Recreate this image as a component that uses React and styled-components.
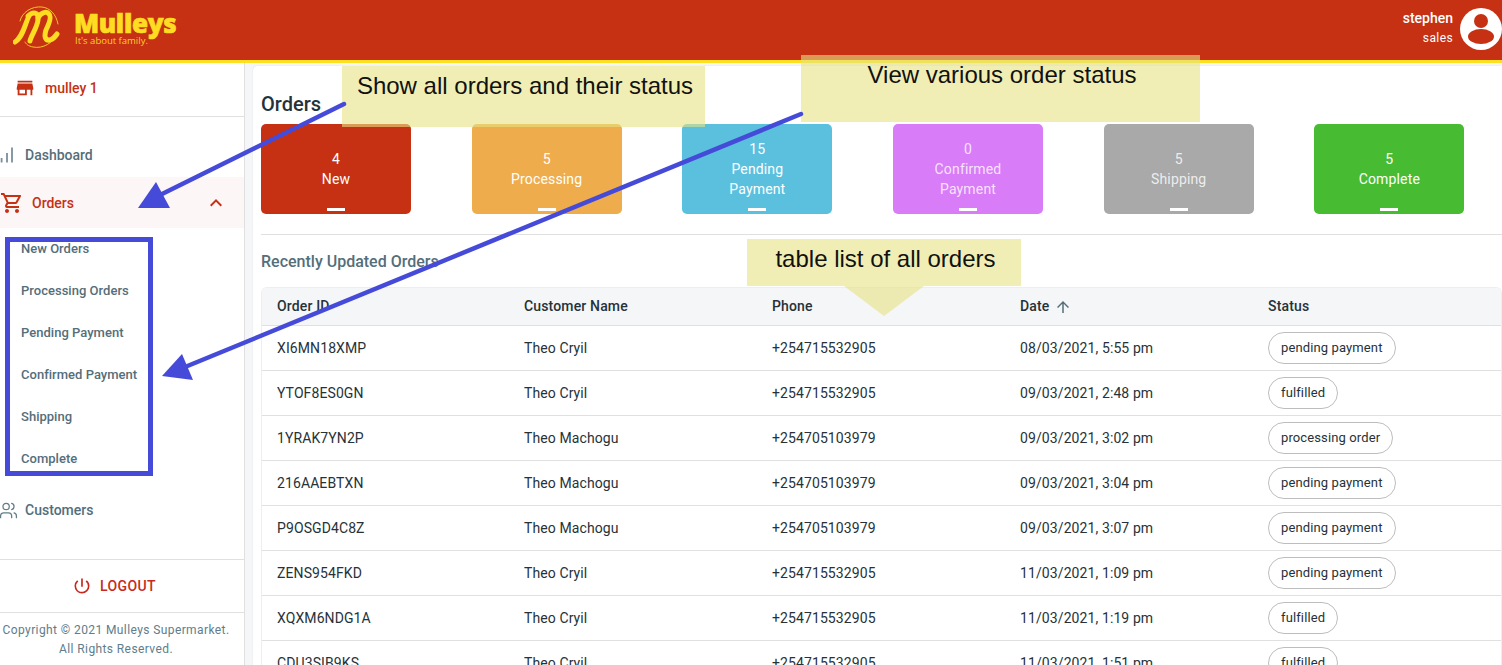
import React from "react";
import styled, { createGlobalStyle } from "styled-components";
import { MdStore, MdOutlineShoppingCart, MdExpandLess, MdArrowUpward, MdPowerSettingsNew } from "react-icons/md";
import { Users } from "lucide-react";

const Global = createGlobalStyle`
  html, body { margin: 0; padding: 0; height: 665px; overflow: hidden; background: #fff; }
  body { font-family: Roboto, "Liberation Sans", sans-serif; }
  * { box-sizing: border-box; }
`;

const Page = styled.div`
  position: relative;
  width: 1502px;
  height: 665px;
  overflow: hidden;
  display: flex;
  flex-direction: column;
  background: #f4f6f8;
`;

const Header = styled.header`
  flex: 0 0 63px;
  background: #c63113;
  border-bottom: 3px solid #fde021;
  display: flex;
  align-items: flex-start;
  justify-content: space-between;
  padding: 6px 0 0 13px;
`;

const Brand = styled.div`
  display: flex;
  align-items: flex-start;
  gap: 14px;
`;

const BrandText = styled.div`
  display: flex;
  flex-direction: column;
  padding-top: 4px;
`;

const BrandName = styled.div`
  font-family: "Open Sans", sans-serif;
  font-weight: 800;
  font-size: 26px;
  line-height: 26px;
  letter-spacing: -0.35px;
  color: #fddc22;
  -webkit-text-stroke: 0.7px #fddc22;
`;

const BrandTag = styled.div`
  font-family: "Open Sans", sans-serif;
  font-size: 9.5px;
  line-height: 10px;
  color: #fbd02a;
  margin-top: 0;
  margin-left: 1px;
`;

const User = styled.div`
  display: flex;
  gap: 7px;
  color: #fff;
  margin-top: 2px;
`;

const UserText = styled.div`
  display: flex;
  flex-direction: column;
  align-items: flex-end;
  padding-top: 1px;
`;

const UserName = styled.div`
  font-size: 14px;
  font-weight: 500;
  line-height: 18px;
`;

const UserRole = styled.div`
  font-size: 12px;
  line-height: 16px;
  margin-top: 3px;
  letter-spacing: 0.4px;
`;

const Body = styled.div`
  flex: 1;
  display: flex;
  min-height: 0;
`;

const Sidebar = styled.aside`
  flex: 0 0 245px;
  background: #fff;
  border-right: 1px solid #e0e0e0;
  display: flex;
  flex-direction: column;
`;

const Shop = styled.div`
  height: 54px;
  flex: none;
  display: flex;
  align-items: center;
  gap: 9px;
  padding: 0 0 4px 14px;
  border-bottom: 1px solid #e0e0e0;
  color: #c63113;
  font-size: 14px;
  font-weight: 500;
`;

const Nav = styled.nav`
  flex: 1;
  padding-top: 18px;
  display: flex;
  flex-direction: column;
`;

const NavItem = styled.div`
  height: ${(p) => (p.$active ? 51 : 42)}px;
  padding: 0 16px ${(p) => (p.$active ? 0 : 2)}px 0;
  display: flex;
  align-items: center;
  gap: ${(p) => (p.$active ? 8 : 7)}px;
  font-size: 14px;
  font-weight: 500;
  color: ${(p) => (p.$active ? "#c63113" : "#546e7a")};
  background: ${(p) => (p.$active ? "#fcf6f6" : "transparent")};
  margin-top: ${(p) => p.$top || 0}px;
`;

const NavLabel = styled.span`
  margin-left: 4px;
`;

const NavSpacer = styled.span`
  margin-left: auto;
  display: flex;
`;

const CustomerIcon = styled(Users)`
  margin-left: -1px;
  color: #607d8b;
`;

const SubList = styled.div`
  display: flex;
  flex-direction: column;
`;

const SubItem = styled.div`
  height: 42px;
  display: flex;
  align-items: center;
  padding: 0 0 2px 21px;
  font-size: 13px;
  letter-spacing: 0.02px;
  font-weight: 500;
  color: #546e7a;
`;

const Logout = styled.div`
  flex: none;
  height: 54px;
  border-top: 1px solid #e0e0e0;
  border-bottom: 1px solid #e0e0e0;
  display: flex;
  align-items: center;
  justify-content: center;
  gap: 8px;
  padding-right: 16px;
  color: #c62a1c;
  font-size: 14px;
  font-weight: 500;
  letter-spacing: 0.4px;
`;

const Copy = styled.div`
  flex: none;
  height: 52px;
  padding: 8px 12px 0 0;
  text-align: center;
  font-size: 12px;
  line-height: 19px;
  letter-spacing: 0.4px;
  color: #607d8b;
  white-space: nowrap;
`;

const Main = styled.main`
  flex: 1;
  min-width: 0;
  padding: 3px 0 0 8px;
`;

const Card = styled.div`
  height: 100%;
  background: #fff;
  border-radius: 4px 0 0 0;
  box-shadow: 0 0 1px rgba(0,0,0,0.2);
  padding: 26px 0 0 8px;
`;

const Title = styled.h1`
  margin: 0;
  font-size: 20px;
  line-height: 24px;
  font-weight: 500;
  color: #263238;
`;

const Tiles = styled.div`
  display: flex;
  justify-content: space-between;
  width: 1203.4px;
  margin-top: 8px;
`;

const Tile = styled.div`
  position: relative;
  width: 150px;
  height: 90px;
  border-radius: 5px;
  background: ${(p) => p.$bg};
  color: ${(p) => (p.$dim ? "rgba(255,255,255,0.8)" : "#fff")};
  display: flex;
  flex-direction: column;
  align-items: center;
  justify-content: center;
  text-align: center;
  font-size: 14px;
  line-height: 20px;
  letter-spacing: 0.15px;
  &::after {
    content: "";
    position: absolute;
    left: 66px;
    bottom: 3px;
    width: 18px;
    height: 3px;
    background: #fff;
  }
`;

const Divider = styled.hr`
  border: 0;
  height: 1px;
  background: #e0e0e0;
  margin: 20px 0 0;
`;

const Sub = styled.h2`
  margin: 17px 0 0;
  font-size: 16px;
  line-height: 20px;
  font-weight: 500;
  color: #546e7a;
`;

const TableWrap = styled.div`
  margin-top: 15px;
  border: 1px solid #eeeeee;
  border-radius: 6px 6px 0 0;
  overflow: hidden;
  border-bottom: 0;
`;

const Row = styled.div`
  display: grid;
  grid-template-columns: 247px repeat(4, 248px);
  height: ${(p) => (p.$head ? 38 : 45)}px;
  padding-bottom: ${(p) => (p.$head ? 2 : 0)}px;
  align-items: center;
  background: ${(p) => (p.$head ? "#f4f6f8" : "#fff")};
  border-bottom: 1px solid #e0e0e0;
  margin-left: -1px;
  font-size: 14px;
  letter-spacing: ${(p) => (p.$head ? 0.15 : 0.1)}px;
  font-weight: ${(p) => (p.$head ? 500 : 400)};
  color: #263238;
`;

const Cell = styled.div`
  padding-left: 16px;
  display: flex;
  align-items: center;
  gap: 5px;
  white-space: nowrap;
`;

const DateArrow = styled(MdArrowUpward)`
  color: #546e7a;
  margin-top: 2px;
`;

const Chip = styled.span`
  height: 32px;
  border: 1px solid #bdbdbd;
  border-radius: 16px;
  padding: 0 12px 2px;
  display: inline-flex;
  align-items: center;
  font-size: 13px;
  letter-spacing: 0.12px;
  color: #263238;
`;

const Note = styled.div`
  position: absolute;
  left: ${(p) => p.$x}px;
  top: ${(p) => p.$y}px;
  width: ${(p) => p.$w}px;
  height: ${(p) => p.$h}px;
  background: rgba(230, 226, 130, 0.6);
  font-family: "Liberation Sans", Arial, sans-serif;
  font-size: 24px;
  line-height: 28px;
  color: #111;
  text-align: center;
  padding: ${(p) => p.$pt}px 0 0 3px;
  white-space: nowrap;
`;

const Overlay = styled.svg`
  position: absolute;
  left: 0;
  top: 0;
  pointer-events: none;
`;

const rows = [
  ["XI6MN18XMP", "Theo Cryil", "+254715532905", "08/03/2021, 5:55 pm", "pending payment"],
  ["YTOF8ES0GN", "Theo Cryil", "+254715532905", "09/03/2021, 2:48 pm", "fulfilled"],
  ["1YRAK7YN2P", "Theo Machogu", "+254705103979", "09/03/2021, 3:02 pm", "processing order"],
  ["216AAEBTXN", "Theo Machogu", "+254705103979", "09/03/2021, 3:04 pm", "pending payment"],
  ["P9OSGD4C8Z", "Theo Machogu", "+254705103979", "09/03/2021, 3:07 pm", "pending payment"],
  ["ZENS954FKD", "Theo Cryil", "+254715532905", "11/03/2021, 1:09 pm", "pending payment"],
  ["XQXM6NDG1A", "Theo Cryil", "+254715532905", "11/03/2021, 1:19 pm", "fulfilled"],
  ["CDU3SIB9KS", "Theo Cryil", "+254715532905", "11/03/2021, 1:51 pm", "fulfilled"],
];

const tiles = [
  ["#c63113", "4", ["New"]],
  ["#eeac4c", "5", ["Processing"]],
  ["#5bc0de", "15", ["Pending", "Payment"]],
  ["#d97cf7", "0", ["Confirmed", "Payment"], true],
  ["#a9a9a9", "5", ["Shipping"], true],
  ["#47bb31", "5", ["Complete"]],
];

const Logo = () => (
  <svg width="47" height="44" viewBox="13 7 47 44" fill="none" strokeLinecap="round">
    <path d="M20 22 C22 13 32 7 42 8 C50 9 56 15 58 25" stroke="#f5c428" strokeWidth="1" />
    <path d="M57 35 C53 44 43 50 33 48 C28 47 26 45 25 43" stroke="#f5c428" strokeWidth="1" />
    <path d="M15 43 C23 38 25 25 29 17" stroke="#fddc22" strokeWidth="5" />
    <path d="M28 17 C33 12 39 13 38 21 C37 29 31 37 30 42" stroke="#fddc22" strokeWidth="5" />
    <path d="M38 19 C41 13 47 12 49 15 C52 18 49 25 46 31 C44 37 45 42 50 41 C53 40 55 38 57 35" stroke="#fddc22" strokeWidth="5" />
  </svg>
);

const Avatar = () => (
  <svg width="42" height="42" viewBox="0 0 42 42">
    <circle cx="21" cy="21" r="21" fill="#fff" />
    <circle cx="21" cy="13" r="7" fill="#c63113" />
    <ellipse cx="21" cy="28.5" rx="13" ry="7.5" fill="#c63113" />
  </svg>
);

const Bars = () => (
  <svg width="14" height="16" viewBox="0 0 14 16" fill="none" stroke="#78909c" strokeWidth="1.8">
    <path d="M1.6 15.5v-4.5M7 15.5V6M12 15.5V0.5" />
  </svg>
);

export default function App() {
  return (
    <Page>
      <Global />
      <Header>
        <Brand>
          <Logo />
          <BrandText>
            <BrandName>Mulleys</BrandName>
            <BrandTag>It's about family.</BrandTag>
          </BrandText>
        </Brand>
        <User>
          <UserText>
            <UserName>stephen</UserName>
            <UserRole>sales</UserRole>
          </UserText>
          <Avatar />
        </User>
      </Header>
      <Body>
        <Sidebar>
          <Shop>
            <MdStore size={22} />
            mulley 1
          </Shop>
          <Nav>
            <NavItem>
              <Bars />
              <NavLabel>Dashboard</NavLabel>
            </NavItem>
            <NavItem $active>
              <MdOutlineShoppingCart size={24} />
              Orders
              <NavSpacer>
                <MdExpandLess size={24} />
              </NavSpacer>
            </NavItem>
            <SubList>
              <SubItem>New Orders</SubItem>
              <SubItem>Processing Orders</SubItem>
              <SubItem>Pending Payment</SubItem>
              <SubItem>Confirmed Payment</SubItem>
              <SubItem>Shipping</SubItem>
              <SubItem>Complete</SubItem>
            </SubList>
            <NavItem $top={10}>
              <CustomerIcon size={19} strokeWidth={1.6} />
              Customers
            </NavItem>
          </Nav>
          <Logout>
            <MdPowerSettingsNew size={20} />
            LOGOUT
          </Logout>
          <Copy>
            Copyright © 2021 Mulleys Supermarket.
            <br />
            All Rights Reserved.
          </Copy>
        </Sidebar>
        <Main>
          <Card>
            <Title>Orders</Title>
            <Tiles>
              {tiles.map(([bg, n, label, dim], i) => (
                <Tile key={i} $bg={bg} $dim={dim}>
                  <span>{n}</span>
                  {label.map((l) => (
                    <span key={l}>{l}</span>
                  ))}
                </Tile>
              ))}
            </Tiles>
            <Divider />
            <Sub>Recently Updated Orders</Sub>
            <TableWrap>
              <Row $head>
                <Cell>Order ID</Cell>
                <Cell>Customer Name</Cell>
                <Cell>Phone</Cell>
                <Cell>
                  Date <DateArrow size={18} />
                </Cell>
                <Cell>Status</Cell>
              </Row>
              {rows.map((r) => (
                <Row key={r[0]}>
                  <Cell>{r[0]}</Cell>
                  <Cell>{r[1]}</Cell>
                  <Cell>{r[2]}</Cell>
                  <Cell>{r[3]}</Cell>
                  <Cell>
                    <Chip>{r[4]}</Chip>
                  </Cell>
                </Row>
              ))}
            </TableWrap>
          </Card>
        </Main>
      </Body>

      <Note $x={342} $y={66} $w={363} $h={61} $pt={6}>Show all orders and their status</Note>
      <Note $x={801} $y={55} $w={399} $h={67} $pt={6}>View various order status</Note>
      <Note $x={747} $y={239} $w={274} $h={47} $pt={6}>table list of all orders</Note>
      <Overlay width="1502" height="665" viewBox="0 0 1502 665">
        <polygon points="844,286 924,286 884,316" fill="rgba(230,226,130,0.6)" />
        <rect x="7.5" y="239.5" width="143" height="234" fill="none" stroke="#454bd8" strokeWidth="5" />
        <line x1="344" y1="104" x2="160" y2="195" stroke="#454bd8" strokeWidth="4.5" strokeLinecap="round" />
        <polygon points="138,208 156,182 170,208" fill="#454bd8" />
        <line x1="801" y1="114" x2="185" y2="367" stroke="#454bd8" strokeWidth="4.5" strokeLinecap="round" />
        <polygon points="162,376 182,354 193,380" fill="#454bd8" />
      </Overlay>
    </Page>
  );
}
